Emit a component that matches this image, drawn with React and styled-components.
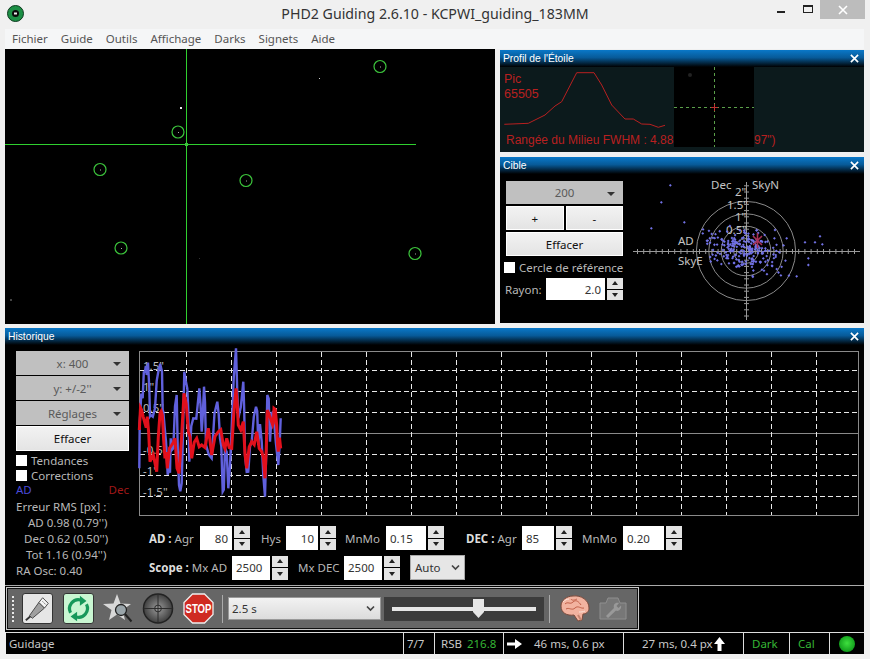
import React from 'react';
import styled, { createGlobalStyle } from 'styled-components';

const UI = '"Noto Sans", "Open Sans", sans-serif';
const ARIAL = '"Liberation Sans", Arial, sans-serif';

const Global = createGlobalStyle`
  html, body { margin: 0; padding: 0; background: #f0f0f0; }
  * { box-sizing: border-box; }
`;

const Win = styled.div`
  width: 870px;
  height: 659px;
  background: #f0f0f0;
  font-family: ${UI};
  font-size: 11.5px;
  overflow: hidden;
`;

const TitleBar = styled.div`
  height: 29px;
  display: grid;
  grid-template-columns: 1fr auto 1fr;
`;

const AppIcon = styled.div`
  margin: 5px 0 0 7px;
  width: 17px;
  height: 17px;
`;

const TitleText = styled.div`
  font-size: 14.2px;
  color: #333;
  line-height: 27px;
`;

const WinButtons = styled.div`
  display: flex;
  justify-content: flex-end;
  align-items: flex-start;
  padding-right: 5px;
`;

const Minimize = styled.div`
  width: 8px;
  height: 2px;
  background: #222;
  margin: 11px 18px 0 0;
`;

const Maximize = styled.div`
  width: 10px;
  height: 8px;
  border: 1px solid #222;
  border-top-width: 2px;
  margin: 5px 7px 0 0;
`;

const Close = styled.div`
  width: 45px;
  height: 19px;
  background: #bcbcbc;
  color: #fff;
  display: flex;
  align-items: center;
  justify-content: center;
`;

const MenuBar = styled.div`
  margin: 0 6px 0 5px;
  height: 20px;
  background: #f5f6f7;
  display: flex;
  align-items: center;
  padding: 0 0 2px 7px;
  gap: 13px;
  color: #555;
`;

const Main = styled.div`
  margin: 0 6px 0 5px;
`;

const TopRow = styled.div`
  display: flex;
  gap: 5px;
  height: 275px;
`;

const Camera = styled.svg`
  display: block;
  width: 490px;
  height: 275px;
  background: #000;
`;

const SideCol = styled.div`
  width: 364px;
  padding-top: 1px;
  display: flex;
  flex-direction: column;
  gap: 5px;
`;

const Panel = styled.div`
  background: #000;
  height: ${(p) => p.$h}px;
`;

const PaneTitle = styled.div`
  height: 17px;
  background: linear-gradient(#0a78c8, #075a98 45%, #000);
  color: #fff;
  font-family: ${ARIAL};
  font-size: 10.3px;
  line-height: 15px;
  padding: 0 5px 0 3px;
  display: flex;
  justify-content: space-between;
  align-items: center;
`;

const ProfileArt = styled.svg`
  display: block;
  width: 364px;
  height: 85px;
  background: #0c1a1c;
`;

const CibleBody = styled.div`
  display: flex;
`;

const CibleLeft = styled.div`
  width: 128px;
  padding: 7px 5px 0 6px;
`;

const Grey = styled.div`
  height: ${(p) => p.$h || 23}px;
  background: #c0c0c0;
  color: #5a5a5a;
  display: flex;
  align-items: center;
  justify-content: center;
  position: relative;
  margin-bottom: ${(p) => p.$mb ?? 1}px;
  font-size: 11.5px;
`;

const Caret = styled.i`
  position: absolute;
  right: 8px;
  top: 11px;
  border: 4px solid transparent;
  border-top: 4px solid #333;
  border-bottom: 0;
`;

const Push = styled.div`
  height: ${(p) => p.$h || 24}px;
  flex: 1;
  background: linear-gradient(#f2f2f2, #e4e4e4);
  border: 1px solid #adadad;
  outline: 1px solid #fff;
  outline-offset: -1px;
  color: #111;
  display: flex;
  align-items: center;
  justify-content: center;
  margin-bottom: ${(p) => p.$mb || 0}px;
`;

const PushRow = styled.div`
  display: flex;
  gap: 2px;
  margin: 2px 0;
`;

const Check = styled.label`
  display: flex;
  align-items: center;
  height: ${(p) => p.$h || 15}px;
  color: #b8b8b8;
  gap: 4px;
  margin-left: ${(p) => p.$ml || 0}px;
  white-space: nowrap;
`;

const Box = styled.span`
  width: 11px;
  height: 11px;
  background: #fff;
  flex: none;
`;

const RayonRow = styled.div`
  display: flex;
  align-items: center;
  color: #b8b8b8;
  margin: 4px -6px 0 -1px;
`;

const Fixed = styled.span`
  width: ${(p) => p.$w}px;
  flex: none;
  margin-left: ${(p) => p.$ml || 0}px;
  color: #b8b8b8;
  white-space: nowrap;
  b { color: #ddd; font-weight: 700; }
`;

const Input = styled.div`
  width: ${(p) => p.$w}px;
  height: ${(p) => p.$h}px;
  background: #fff;
  color: #333;
  display: flex;
  align-items: center;
  justify-content: ${(p) => (p.$left ? 'flex-start' : 'flex-end')};
  padding: 0 4px;
  flex: none;
`;

const Spin = styled.div`
  width: 16px;
  height: ${(p) => p.$h}px;
  margin-left: 2px;
  display: flex;
  flex-direction: column;
  gap: 1px;
  flex: none;
`;

const SpinBtn = styled.div`
  flex: 1;
  background: #e3e3e3;
  display: flex;
  align-items: center;
  justify-content: center;
  &::after {
    content: '';
    border: 3.5px solid transparent;
    ${(p) => (p.$down ? 'border-top: 4px solid #222; border-bottom: 0;' : 'border-bottom: 4px solid #222; border-top: 0;')}
  }
`;

const TargetArt = styled.svg`
  display: block;
  width: 236px;
  height: 149px;
  overflow: hidden;
`;

const History = styled.div`
  margin-top: 4px;
  background: #000;
  height: 258px;
  border-bottom: 1px solid #aaa;
`;

const HistoryBody = styled.div`
  display: flex;
  padding: 6px 0 0 11px;
`;

const HistLeft = styled.div`
  width: 113px;
  flex: none;
`;

const LegendRow = styled.div`
  display: flex;
  justify-content: space-between;
  height: 16px;
  line-height: 16px;
  margin-top: -1px;
`;

const Series = styled.span`
  color: ${(p) => p.$c};
`;

const Stats = styled.div`
  color: #b8b8b8;
  line-height: 16px;
  margin-top: 1px;
`;

const StatRow = styled.div`
  padding-left: ${(p) => p.$pl || 0}px;
  white-space: nowrap;
`;

const HistRight = styled.div`
  margin-left: 10px;
  width: 720px;
`;

const GraphArt = styled.svg`
  display: block;
  width: 720px;
  height: 165px;
  overflow: visible;
`;

const CtrlRow = styled.div`
  display: flex;
  align-items: center;
  padding-left: 10px;
  margin-top: ${(p) => p.$mt}px;
`;

const AutoSelect = styled.div`
  width: 55px;
  height: 25px;
  margin-left: 10px;
  background: #e6e6e6;
  border: 1px solid #aaa;
  color: #333;
  display: flex;
  align-items: center;
  justify-content: space-between;
  padding: 0 4px;
`;

const ToolArea = styled.div`
  background: #000;
  height: 46px;
  padding: 1px 0 0 1px;
`;

const Toolbar = styled.div`
  width: 633px;
  height: 43px;
  background: #666;
  border: 1px solid #c8c8c8;
  box-shadow: inset 0 0 0 1px #111;
  display: flex;
  align-items: center;
  padding-left: 5px;
`;

const Grip = styled.div`
  width: 2px;
  height: 26px;
  border-left: 2px dotted #e8e8e8;
`;

const Tool = styled.div`
  width: ${(p) => p.$w || 31}px;
  height: 31px;
  margin-left: ${(p) => p.$ml}px;
  background: ${(p) => p.$bg || 'transparent'};
  border: ${(p) => (p.$bg ? '1px solid #333' : 'none')};
  border-radius: 3px;
  flex: none;
  svg { display: block; width: 100%; height: 100%; }
`;

const Sep = styled.div`
  width: 1px;
  height: 28px;
  background: #aaa;
  margin-left: ${(p) => p.$ml}px;
`;

const Exposure = styled.div`
  width: 153px;
  height: 23px;
  margin-left: 5px;
  background: linear-gradient(#f2f2f2, #dcdcdc);
  border: 1px solid #999;
  color: #333;
  display: flex;
  align-items: center;
  justify-content: space-between;
  padding: 0 5px 0 3px;
`;

const SliderBox = styled.div`
  width: 160px;
  height: 24px;
  margin-left: 3px;
  background: #3c3c3c;
  padding: 0 8px;
  display: flex;
  align-items: center;
  position: relative;
`;

const SliderTrack = styled.div`
  width: 144px;
  height: 4px;
  background: #e6e6e6;
`;

const SliderThumb = styled.svg`
  position: absolute;
  left: 89px;
  top: 2px;
  width: 11px;
  height: 19px;
`;

const StatusBar = styled.div`
  height: 22px;
  background: #000;
  border-top: 1px solid #ddd;
  display: flex;
  margin-left: 1px;
`;

const Cell = styled.div`
  width: ${(p) => p.$w}px;
  flex: none;
  color: ${(p) => p.$c || '#c8c8c8'};
  border-left: ${(p) => (p.$first ? 'none' : '1px solid #ddd')};
  padding-left: ${(p) => p.$pl ?? 3}px;
  display: flex;
  align-items: center;
  white-space: nowrap;
  gap: ${(p) => p.$gap || 0}px;
`;

const Green = styled.span`
  color: #35b535;
`;

const Led = styled.span`
  width: 16px;
  height: 16px;
  border-radius: 50%;
  background: radial-gradient(circle at 50% 45%, #3ee03e, #0f9a1a 75%);
`;

/* ------ data, all traced off the screen ------ */

function rng(seed) {
  let s = seed;
  return () => {
    s = (s * 16807) % 2147483647;
    return s / 2147483647;
  };
}

const BLUE = [[28,370],[30,220],[38,160],[45,80],[50,90],[58,130],[62,210],[75,190],[85,80],[96,80],[100,200],[108,290],[118,370],[122,280],[130,310],[140,150],[147,420],[155,415],[163,80],[172,130],[178,350],[190,220],[208,130],[215,260],[222,125],[228,300],[245,340],[262,170],[270,280],[278,440],[285,310],[295,430],[305,250],[318,10],[325,220],[340,110],[345,330],[355,380],[365,290],[378,185],[385,300],[395,290],[405,455],[412,150],[420,290],[430,200],[445,360],[452,220]];
const RED = [[28,255],[35,195],[45,235],[52,215],[60,350],[80,380],[90,205],[97,210],[105,340],[112,370],[125,300],[135,280],[147,385],[162,145],[175,260],[185,340],[200,280],[215,300],[235,250],[245,330],[265,260],[280,300],[290,280],[305,310],[318,130],[325,240],[340,230],[350,370],[365,290],[380,260],[395,320],[405,400],[412,195],[428,240],[432,190],[440,240],[445,320],[452,310]];

// zoom coords to chart coords, with some noise added between the points
function trace(list, seed, amp) {
  const r = rng(seed);
  const out = [];
  list.forEach(([x, y], i) => {
    const px = x / 3 - 9;
    const py = y / 3 - 6;
    if (i > 0) {
      const [x0, y0] = list[i - 1];
      out.push([(x0 + x) / 6 - 9, (y0 + y) / 6 - 6 + (r() - 0.5) * amp]);
    }
    out.push([px, py]);
  });
  return out.map((p) => p[0].toFixed(1) + ',' + p[1].toFixed(1)).join(' ');
}

const GRID_X = [47.5, 92.5, 137.5, 182.5, 227.5, 272.5, 317.5, 362.5, 407.5, 452.5, 497.5, 542.5, 587.5, 632.5, 677.5];
const GRID_Y = [19.5, 40.5, 61.5, 103.5, 124.5, 145.5];

const OUTLIERS = [[91,31],[64,82],[133,142],[34,160],[540,184],[525,202],[547,208],[505,250],[505,270],[495,202],[470,304],[440,190],[405,165]];
const CX = 118;
const CY = 77;

function scatter() {
  const r = rng(4711);
  const pts = OUTLIERS.map(([x, y]) => [x / 3 + 12, y / 3 + 1]);
  for (let i = 0; i < 230; i++) {
    const g1 = (r() + r() + r() - 1.5) * 1.3;
    const g2 = (r() + r() + r() - 1.5) * 1.3;
    const x = g1 * 27 - 2;
    pts.push([CX + x, CY + g2 * 16 + x * 0.22]);
  }
  return pts;
}
const SCATTER = scatter();

const TICKS_X = Array.from({ length: 36 }, (_, i) => i * 6.2 + 9.5);
const TICKS_Y = Array.from({ length: 22 }, (_, i) => i * 6.2 + 11.8);

const STARS = [[380, 66.5], [178, 132], [100, 169.5], [246, 180.5], [121, 248], [415, 253.5]];

/* ------ small parts ------ */

function X({ size = 9, w = 1.8 }) {
  return (
    <svg width={size} height={size} viewBox="0 0 10 10">
      <path d="M1 1 9 9M9 1 1 9" stroke="#fff" strokeWidth={w} fill="none" />
    </svg>
  );
}

function Pane({ children }) {
  return (
    <PaneTitle>
      <span>{children}</span>
      <X />
    </PaneTitle>
  );
}

function SpinField({ w, h = 24, value, left }) {
  return (
    <>
      <Input $w={w} $h={h} $left={left}>{value}</Input>
      <Spin $h={h}>
        <SpinBtn />
        <SpinBtn $down />
      </Spin>
    </>
  );
}

function GreyMenu({ children, h, mb }) {
  return (
    <Grey $h={h} $mb={mb}>
      {children}
      <Caret />
    </Grey>
  );
}

function Chevron() {
  return (
    <svg width="9" height="7" viewBox="0 0 9 7">
      <path d="M1 1.5 4.5 5 8 1.5" stroke="#444" strokeWidth="1.7" fill="none" />
    </svg>
  );
}

function UsbIcon() {
  return (
    <svg viewBox="0 0 31 31">
      <path d="M3 28 9 23" stroke="#333" strokeWidth="2" />
      <path d="M7 23 17 9 23 15 10 26Z" fill="#a0a0a0" stroke="#444" />
      <path d="M17 9 21 4 27 10 23 15Z" fill="#f4f4f4" stroke="#444" />
      <path d="M21 8l1 1M23 10l1 1" stroke="#444" />
    </svg>
  );
}

function LoopIcon() {
  return (
    <svg viewBox="0 0 31 31">
      <g fill="none" stroke="#17985a" strokeWidth="3.4">
        <path d="M7 20A9.5 9.5 0 0 1 18 6.5" />
        <path d="M24 11A9.5 9.5 0 0 1 13 24.5" />
      </g>
      <path d="M17 2 24 7.5 17 12.5Z M14 19 7 24 14 29Z" fill="#17985a" />
    </svg>
  );
}

function StarIcon() {
  return (
    <svg viewBox="0 0 31 31">
      <path d="M15 1 18.5 10.5 29 11 20.5 17 23 27 15 21.5 7 27 9.5 17 1 11 11.5 10.5Z" fill="#d8d8d8" />
      <circle cx="19" cy="17" r="5.5" fill="#9aa5aa" stroke="#222" strokeWidth="1.3" />
      <path d="M23 21 29.5 28.5" stroke="#222" strokeWidth="2" />
    </svg>
  );
}

function ScopeIcon() {
  return (
    <svg viewBox="0 0 32 32">
      <defs>
        <radialGradient id="scopeFill">
          <stop offset="0" stopColor="#9a9a9a" />
          <stop offset="1" stopColor="#3e3e3e" />
        </radialGradient>
      </defs>
      <circle cx="16" cy="16" r="15" fill="url(#scopeFill)" stroke="#222" strokeWidth="1.5" />
      <path d="M16 1V31M1 16H31" stroke="#2a2a2a" />
      <circle cx="16" cy="16" r="3.5" fill="none" stroke="#2a2a2a" />
    </svg>
  );
}

function StopIcon() {
  return (
    <svg viewBox="0 0 31 31">
      <path d="M9.5 1H21.5L30 9.5V21.5L21.5 30H9.5L1 21.5V9.5Z" fill="#cf2b22" stroke="#eee" strokeWidth="1.3" />
      <text transform="translate(15.5 20) scale(.8 1)" textAnchor="middle" fontFamily={ARIAL} fontWeight="700" fontSize="12" fill="#fff">STOP</text>
    </svg>
  );
}

function BrainIcon() {
  return (
    <svg viewBox="0 0 31 31">
      <path d="M2 13C2 7 8 3 14 3 22 2 30 7 30 15 30 19 27 21 24 21L23 27 19 28 15 22C8 23 2 20 2 13Z" fill="#f2b3a0" stroke="#7a4a3c" />
      <path d="M6 11C9 8 11 12 14 9S20 9 22 12M7 16C10 14 13 18 16 15S22 16 25 15M12 6C13 8 16 7 18 6" fill="none" stroke="#c05f48" />
      <path d="M4 9C6 7 8 6 10 6M20 19C22 19 24 19 26 18" fill="none" stroke="#fbe3da" />
      <path d="M19 22 22 27" stroke="#c58470" strokeWidth="2" />
    </svg>
  );
}

function RigIcon() {
  return (
    <svg viewBox="0 0 28 23">
      <path d="M1 6H7L9 1H19L21 6H27V22H1Z" fill="#777" stroke="#8f8f8f" />
      <path d="M7 19 15 11C14 8 16 5 20 6L17.5 9 19.5 11 22 8.5C23 12 19 15 17 13.5L9 21Z" fill="#999" />
    </svg>
  );
}

export default function App() {
  return (
    <Win>
      <Global />
      <TitleBar>
        <AppIcon>
          <svg viewBox="0 0 17 17" width="17" height="17">
            <circle cx="8.5" cy="8.5" r="8" fill="#1c8f45" stroke="#0d3a1f" />
            <circle cx="8.5" cy="8.5" r="3.5" fill="#0a0a0a" />
            <rect x="7" y="7.5" width="3" height="2" fill="#eee" />
          </svg>
        </AppIcon>
        <TitleText>PHD2 Guiding 2.6.10 - KCPWI_guiding_183MM</TitleText>
        <WinButtons>
          <Minimize />
          <Maximize />
          <Close><X size={10} w={1.6} /></Close>
        </WinButtons>
      </TitleBar>

      <MenuBar>
        {['Fichier', 'Guide', 'Outils', 'Affichage', 'Darks', 'Signets', 'Aide'].map((m) => (
          <span key={m}>{m}</span>
        ))}
      </MenuBar>

      <Main>
        <TopRow>
          <Camera viewBox="5 49 490 275" shapeRendering="crispEdges">
            <rect x="186" y="49" width="1" height="275" fill="#2fd02f" />
            <rect x="5" y="144" width="411" height="1" fill="#2fd02f" />
            <rect x="185" y="143" width="3" height="3" fill="#3cc43c" />
            {STARS.map(([x, y]) => (
              <g key={x} shapeRendering="auto">
                <circle cx={x} cy={y} r="6" fill="none" stroke="#3cc43c" strokeWidth="1.2" />
                <rect x={x} y={y} width="1" height="1" fill="#aaa" />
              </g>
            ))}
            <rect x="180" y="106.5" width="2" height="2" fill="#eee" />
            <rect x="319" y="78" width="1" height="1" fill="#ccc" />
            <rect x="9.5" y="299" width="2" height="2" fill="#444" />
            <rect x="199" y="258" width="1" height="1" fill="#333" />
          </Camera>

          <SideCol>
            <Panel $h={102}>
              <Pane>Profil de l'Étoile</Pane>
              <ProfileArt viewBox="0 0 364 85">
                <g fontFamily={ARIAL} fill="#b82020">
                  <text x="4" y="16" fontSize="12.5">Pic</text>
                  <text x="4" y="31" fontSize="12.5">65505</text>
                  <text x="6" y="77" fontSize="12">Rangée du Milieu FWHM : 4.88</text>
                  <text x="254" y="77" fontSize="12">97")</text>
                </g>
                <polyline
                  points="4.3,57.3 28.3,56.3 45,48 55,39 61.7,34.7 76.7,5.7 94,5.7 101.7,18 111.7,38 125,52 133.3,52 141.7,57 150,57.3 158.3,60.3 165,58.3"
                  fill="none"
                  stroke="#b82020"
                />
                <rect x="174" y="0" width="80" height="80" fill="#000" />
                <circle cx="190" cy="8" r="2" fill="#222" />
                <path d="M174 40.5H254M214.5 0V80" stroke="#5ba04a" strokeDasharray="3 3" />
                <path d="M211 40.5H218M214.5 37V44" stroke="#c03030" />
              </ProfileArt>
            </Panel>

            <Panel $h={166}>
              <Pane>Cible</Pane>
              <CibleBody>
                <CibleLeft>
                  <GreyMenu h={23} mb={0}>200</GreyMenu>
                  <PushRow>
                    <Push>+</Push>
                    <Push>-</Push>
                  </PushRow>
                  <Push $h={24} $mb={4}>Effacer</Push>
                  <Check $h={14} $ml={-2}>
                    <Box />
                    Cercle de référence
                  </Check>
                  <RayonRow>
                    <Fixed $w={41}>Rayon:</Fixed>
                    <SpinField w={59} h={22} value="2.0" />
                  </RayonRow>
                </CibleLeft>
                <TargetArt viewBox="0 0 236 149">
                  {[12.4, 24.8, 37.2, 49.6].map((r) => (
                    <circle key={r} cx={CX} cy={CY} r={r} fill="none" stroke="#8a8a8a" />
                  ))}
                  <path d={`M5 ${CY}.5H232M${CX}.5 8V146`} stroke="#999" />
                  {TICKS_X.map((x) => (
                    <path key={x} d={`M${x} ${CY - 2}V${CY + 3}`} stroke="#999" />
                  ))}
                  {TICKS_Y.map((y) => (
                    <path key={y} d={`M${CX - 2} ${y}H${CX + 3}`} stroke="#999" />
                  ))}
                  <g fontFamily={UI} fontSize="11.5" fill="#c4c4c4">
                    <text x="83" y="15">Dec</text>
                    <text x="124" y="15">SkyN</text>
                    <text x="107" y="22">2"</text>
                    <text x="99" y="35">1.5"</text>
                    <text x="107" y="47">1"</text>
                    <text x="98" y="60">0.5"</text>
                    <text x="50" y="71">AD</text>
                    <text x="50" y="91">SkyE</text>
                  </g>
                  {SCATTER.map(([x, y], i) => (
                    <rect key={i} x={x - 1} y={y - 1} width="2" height="2" fill="#7272e6" transform={`rotate(45 ${x} ${y})`} />
                  ))}
                  <path d="M125 62 134 71M134 62 125 71M129.5 59V74" stroke="#a83058" strokeWidth="1.6" />
                </TargetArt>
              </CibleBody>
            </Panel>
          </SideCol>
        </TopRow>

        <History>
          <Pane>Historique</Pane>
          <HistoryBody>
            <HistLeft>
              <GreyMenu h={24}>x: 400</GreyMenu>
              <GreyMenu h={24}>y: +/-2''</GreyMenu>
              <GreyMenu h={24} mb={1}>Réglages</GreyMenu>
              <Push $h={25} $mb={2}>Effacer</Push>
              <Check $h={15}>
                <Box />
                Tendances
              </Check>
              <Check $h={15}>
                <Box />
                Corrections
              </Check>
              <LegendRow>
                <Series $c="#4a4ad8">AD</Series>
                <Series $c="#a01818">Dec</Series>
              </LegendRow>
              <Stats>
                <StatRow>Erreur RMS [px] :</StatRow>
                <StatRow $pl={12}>AD  0.98 (0.79'')</StatRow>
                <StatRow $pl={8}>Dec  0.62 (0.50'')</StatRow>
                <StatRow $pl={10}>Tot  1.16 (0.94'')</StatRow>
                <StatRow>RA Osc: 0.40</StatRow>
              </Stats>
            </HistLeft>

            <HistRight>
              <GraphArt viewBox="0 0 720 165">
                <rect x="0.5" y="0.5" width="719" height="164" fill="none" stroke="#8a8a8a" />
                <path d="M0 82.5H719" stroke="#8a8a8a" />
                {GRID_Y.map((y) => (
                  <path key={y} d={`M1 ${y}H719`} stroke="#e8e8e8" strokeDasharray="5 3" />
                ))}
                {GRID_X.map((x) => (
                  <path key={x} d={`M${x} 1V164`} stroke="#e8e8e8" strokeDasharray="5 3" />
                ))}
                <g fontFamily={UI} fontSize="11.5" fill="#bdbdbd">
                  <text x="4" y="19">1.5"</text>
                  <text x="4" y="40">1"</text>
                  <text x="4" y="61">0.5"</text>
                  <text x="4" y="103">-0.5"</text>
                  <text x="4" y="124">-1"</text>
                  <text x="4" y="145">-1.5"</text>
                </g>
                <polyline points={trace(BLUE, 77, 40)} fill="none" stroke="#6060dc" strokeWidth="2.4" />
                <polyline points={trace(RED, 901, 25)} fill="none" stroke="#e2101c" strokeWidth="3" />
              </GraphArt>

              <CtrlRow $mt={10}>
                <Fixed $w={51}><b>AD :</b> Agr</Fixed>
                <SpinField w={32} value="80" />
                <Fixed $w={25} $ml={11}>Hys</Fixed>
                <SpinField w={32} value="10" />
                <Fixed $w={41} $ml={9}>MnMo</Fixed>
                <SpinField w={40} value="0.15" left />
                <Fixed $w={56} $ml={22}><b>DEC :</b> Agr</Fixed>
                <SpinField w={32} value="85" left />
                <Fixed $w={41} $ml={10}>MnMo</Fixed>
                <SpinField w={41} value="0.20" left />
              </CtrlRow>
              <CtrlRow $mt={5}>
                <Fixed $w={83}><b>Scope :</b> Mx AD</Fixed>
                <SpinField w={38} value="2500" left />
                <Fixed $w={46} $ml={10}>Mx DEC</Fixed>
                <SpinField w={38} value="2500" left />
                <AutoSelect>Auto <Chevron /></AutoSelect>
              </CtrlRow>
            </HistRight>
          </HistoryBody>
        </History>

        <ToolArea>
          <Toolbar>
            <Grip />
            <Tool $ml={8} $bg="#e6e6e6"><UsbIcon /></Tool>
            <Tool $ml={10} $bg="#c9f6d2"><LoopIcon /></Tool>
            <Tool $ml={8}><StarIcon /></Tool>
            <Tool $ml={9} $w={32}><ScopeIcon /></Tool>
            <Tool $ml={9}><StopIcon /></Tool>
            <Sep $ml={8} />
            <Exposure>2.5 s <Chevron /></Exposure>
            <SliderBox>
              <SliderTrack />
              <SliderThumb viewBox="0 0 11 19">
                <path d="M0 0H11V13L5.5 19 0 13Z" fill="#e6e6e6" />
              </SliderThumb>
            </SliderBox>
            <Sep $ml={5} />
            <Tool $ml={9}><BrainIcon /></Tool>
            <Tool $ml={9} $w={28}><RigIcon /></Tool>
          </Toolbar>
        </ToolArea>

        <StatusBar>
          <Cell $w={397} $first>Guidage</Cell>
          <Cell $w={31}>7/7</Cell>
          <Cell $w={69} $pl={6} $gap={5}>RSB <Green>216.8</Green></Cell>
          <Cell $w={120} $gap={12}>
            <svg width="15" height="10" viewBox="0 0 15 10"><path d="M0 3.5H8V0L15 5 8 10V6.5H0Z" fill="#fff" /></svg>
            46 ms, 0.6 px
          </Cell>
          <Cell $w={120} $pl={18} $gap={1}>
            27 ms, 0.4 px
            <svg width="11" height="14" viewBox="0 0 11 14"><path d="M3.5 14V7H0L5.5 0 11 7H7.5V14Z" fill="#fff" /></svg>
          </Cell>
          <Cell $w={46} $pl={8} $c="#35b535">Dark</Cell>
          <Cell $w={40} $pl={8} $c="#35b535">Cal</Cell>
          <Cell $w={34} $pl={9}><Led /></Cell>
        </StatusBar>
      </Main>
    </Win>
  );
}
